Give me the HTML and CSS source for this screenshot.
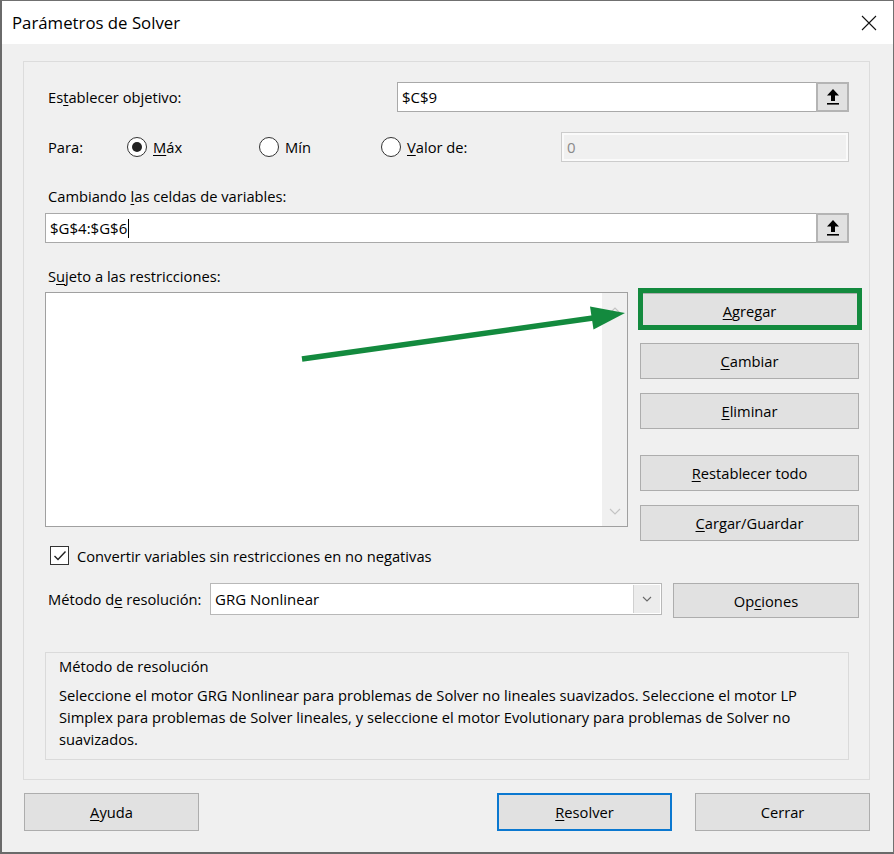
FILE: index.html
```html
<!DOCTYPE html>
<html lang="es">
<head>
<meta charset="utf-8">
<title>Parámetros de Solver</title>
<link rel="stylesheet" href="styles.css">
</head>
<body>
<div class="window">
  <div class="titlebar">
    <span class="title">Parámetros de Solver</span>
    <svg class="close" width="16" height="16" viewBox="0 0 16 16"><path d="M1 1 L15 15 M15 1 L1 15" stroke="#111" stroke-width="1.1" fill="none"/></svg>
  </div>
  <div class="client">
    <div class="panel">
      <div class="row row-obj">
        <span class="lbl">Es<u>t</u>ablecer objetivo:</span>
        <div class="ref ref-obj">
          <span class="val">$C$9</span>
          <span class="refbtn"><svg width="12" height="16" viewBox="0 0 12 16"><path d="M6 0 L12 6.5 L8 6.5 L8 12 L4 12 L4 6.5 L0 6.5 Z" fill="#000"/><rect x="0" y="14" width="12" height="1.6" fill="#000"/></svg></span>
        </div>
      </div>
      <div class="row row-para">
        <span class="lbl para-lbl">Para:</span>
        <span class="opt opt-max"><span class="radio checked"></span><span><u>M</u>áx</span></span>
        <span class="opt opt-min"><span class="radio"></span><span>Mín</span></span>
        <span class="opt opt-val"><span class="radio"></span><span><u>V</u>alor de:</span></span>
        <div class="input disabled">0</div>
      </div>
      <div class="lbl block-lbl lbl-cambiando">Cambiando <u>l</u>as celdas de variables:</div>
      <div class="ref ref-full">
        <span class="val">$G$4:$G$6<span class="caret"></span></span>
        <span class="refbtn"><svg width="12" height="16" viewBox="0 0 12 16"><path d="M6 0 L12 6.5 L8 6.5 L8 12 L4 12 L4 6.5 L0 6.5 Z" fill="#000"/><rect x="0" y="14" width="12" height="1.6" fill="#000"/></svg></span>
      </div>
      <div class="lbl block-lbl lbl-sujeto">S<u>u</u>jeto a las restricciones:</div>
      <div class="constraints">
        <div class="listbox">
          <div class="list-area"></div>
          <div class="vscroll">
            <svg width="12" height="8" viewBox="0 0 12 8"><path d="M1 7 L6 2 L11 7" stroke="#c4c4c4" stroke-width="1.2" fill="none"/></svg>
            <svg width="12" height="8" viewBox="0 0 12 8"><path d="M1 1 L6 6 L11 1" stroke="#c4c4c4" stroke-width="1.2" fill="none"/></svg>
          </div>
        </div>
        <div class="btncol">
          <button class="btn btn-agregar"><u>A</u>gregar<span class="highlight"></span></button>
          <button class="btn"><u>C</u>ambiar</button>
          <button class="btn"><u>E</u>liminar</button>
          <button class="btn btn-gap"><u>R</u>establecer todo</button>
          <button class="btn"><u>C</u>argar/Guardar</button>
        </div>
        <svg class="annot-arrow" width="340" height="60" viewBox="0 0 340 60">
          <line x1="1" y1="53" x2="292" y2="12" stroke="#138a3e" stroke-width="5.5"/>
          <polygon points="324,7 292.5,23.5 289,0.5" fill="#138a3e"/>
        </svg>
      </div>
      <div class="check-row">
        <span class="checkbox"><svg width="14" height="12" viewBox="0 0 14 12"><path d="M1.5 6 L5 9.5 L12.5 1.5" stroke="#222" stroke-width="1.4" fill="none"/></svg></span>
        <span>Convertir variables sin restricciones en no negativas</span>
      </div>
      <div class="method-row">
        <span class="lbl method-lbl">Método d<u>e</u> resolución:</span>
        <div class="select">
          <span class="select-val">GRG Nonlinear</span>
          <span class="select-btn"><svg width="10" height="6" viewBox="0 0 10 6"><path d="M1 1 L5 5 L9 1" stroke="#6a6a6a" stroke-width="1.1" fill="none"/></svg></span>
        </div>
        <button class="btn btn-opciones">Op<u>c</u>iones</button>
      </div>
      <div class="group">
        <div class="group-title">Método de resolución</div>
        <p class="group-text">Seleccione el motor GRG Nonlinear para problemas de Solver no lineales suavizados. Seleccione el motor LP Simplex para problemas de Solver lineales, y seleccione el motor Evolutionary para problemas de Solver no suavizados.</p>
      </div>
    </div>
    <div class="footer">
      <button class="btn fbtn btn-ayuda"><u>A</u>yuda</button>
      <button class="btn fbtn btn-resolver"><u>R</u>esolver</button>
      <button class="btn fbtn btn-cerrar">Cerrar</button>
    </div>
  </div>
</div>
</body>
</html>
```
FILE: styles.css
```css
* { box-sizing: border-box; }
html, body { margin: 0; padding: 0; }
body {
  font-family: "Open Sans", "Noto Sans", "Liberation Sans", sans-serif;
  font-size: 14.7px;
  color: #000;
  background: #fff;
}
u { text-decoration: underline; text-underline-offset: 2px; text-decoration-thickness: 1px; }

.window {
  width: 894px;
  height: 854px;
  border: 1px solid #707070;
  border-left: 2px solid #6a6a6a;
  border-bottom: 2px solid #6a6a6a;
  display: flex;
  flex-direction: column;
  background: #f0f0f0;
}
.titlebar {
  height: 43px;
  background: #fff;
  display: flex;
  align-items: center;
  justify-content: space-between;
  padding: 0 16px 0 10px;
  flex: none;
}
.title { font-size: 16.8px; line-height: 20px; margin-top: 1px; }
.close { margin-top: 1px; }

.client {
  flex: 1;
  padding: 17px 23px 0 21px;
  display: flex;
  flex-direction: column;
}
.panel {
  position: relative;
  width: 847px;
  border: 1px solid #dcdcdc;
  padding: 20px 10px 19px 21px;
}

.row { display: flex; align-items: center; height: 30px; }
.lbl { padding-left: 3px; line-height: 20px; }
.row-obj .lbl { flex: 1; }

.ref {
  display: flex;
  align-items: stretch;
  height: 30px;
  background: #fff;
  border: 1px solid #a9a9a9;
}
.ref .val { flex: 1; padding-left: 4px; line-height: 28px; font-size: 15px; }
.ref-obj { width: 452px; margin-right: 10px; }
.ref-full { margin-top: 7px; margin-right: 10px; }
.refbtn {
  width: 33px;
  background: #e1e1e1;
  border: 2px solid #b4b4b4;
  margin: -1px -1px -1px 0;
  display: flex;
  align-items: center;
  justify-content: center;
}
.caret { display: inline-block; width: 1px; height: 19px; background: #000; vertical-align: -4px; margin-left: 1px; }

.row-para { margin-top: 20px; }
.para-lbl { width: 82px; }
.opt { display: flex; align-items: center; gap: 6px; }
.opt-max { width: 132px; }
.opt-min { width: 122px; }
.radio {
  width: 20px;
  height: 20px;
  border: 1px solid #333;
  border-radius: 50%;
  background: #fff;
  display: flex;
  align-items: center;
  justify-content: center;
}
.radio.checked::after {
  content: "";
  width: 10px;
  height: 10px;
  border-radius: 50%;
  background: #222;
}
.input.disabled {
  margin-left: auto;
  margin-right: 10px;
  width: 288px;
  height: 30px;
  border: 1px solid #cccccc;
  background: #f0f0f0;
  box-shadow: inset 0 0 0 2px #fafafa;
  color: #8a8a8a;
  padding-left: 5px;
  line-height: 28px;
  font-size: 15px;
}

.block-lbl { height: 20px; }
.lbl-cambiando { margin-top: 24px; }
.lbl-sujeto { margin-top: 23px; }

.constraints {
  position: relative;
  display: flex;
  align-items: flex-start;
  margin-top: 6px;
}
.listbox {
  width: 583px;
  height: 235px;
  border: 1px solid #a0a0a0;
  background: #fff;
  display: flex;
}
.list-area { flex: 1; }
.vscroll {
  width: 25px;
  background: #f0f0f0;
  display: flex;
  flex-direction: column;
  justify-content: space-between;
  align-items: center;
  padding: 13px 0 10px;
}
.btncol {
  margin-left: 12px;
  width: 219px;
  display: flex;
  flex-direction: column;
  gap: 14px;
  padding-top: 1px;
}
.btn {
  font-family: inherit;
  font-size: 14.7px;
  color: #000;
  background: #e1e1e1;
  border: 1px solid #adadad;
  border-radius: 0;
  height: 36px;
  padding: 0;
  margin: 0;
  position: relative;
}
.btn-gap { margin-top: 12px; }
.highlight {
  position: absolute;
  left: -3px;
  right: -4px;
  top: -6px;
  bottom: -2px;
  border: 5px solid #138a3e;
}
.annot-arrow {
  position: absolute;
  left: 256px;
  top: 14px;
  overflow: visible;
}

.check-row {
  display: flex;
  align-items: center;
  margin-top: 5px;
  height: 19px;
  padding-left: 5px;
  gap: 8px;
}
.checkbox {
  width: 19px;
  height: 19px;
  border: 1px solid #333;
  background: #fff;
  display: flex;
  align-items: center;
  justify-content: center;
}

.method-row {
  display: flex;
  align-items: flex-start;
  margin-top: 18px;
  height: 35px;
}
.method-lbl { width: 165px; line-height: 32px; }
.select {
  width: 452px;
  height: 32px;
  border: 1px solid #b8b8b8;
  background: #fff;
  display: flex;
}
.select-val { flex: 1; padding-left: 4px; line-height: 30px; font-size: 15px; }
.select-btn {
  width: 27px;
  background: #ececec;
  border-left: 1px solid #d0d0d0;
  margin: 1px;
  display: flex;
  align-items: center;
  justify-content: center;
}
.btn-opciones { margin-left: 11px; width: 186px; height: 35px; }

.group {
  margin-top: 34px;
  margin-right: 10px;
  height: 108px;
  border: 1px solid #dadada;
  padding: 3px 10px 0 13px;
}
.group-title { line-height: 20px; }
.group-text { margin: 8px 0 0; line-height: 22px; }

.footer {
  display: flex;
  margin-top: 13px;
  padding-left: 1px;
}
.fbtn { width: 175px; height: 38px; }
.btn-resolver { margin-left: auto; border: 2px solid #0b78d0; }
.btn-cerrar { margin-left: 23px; }
```
